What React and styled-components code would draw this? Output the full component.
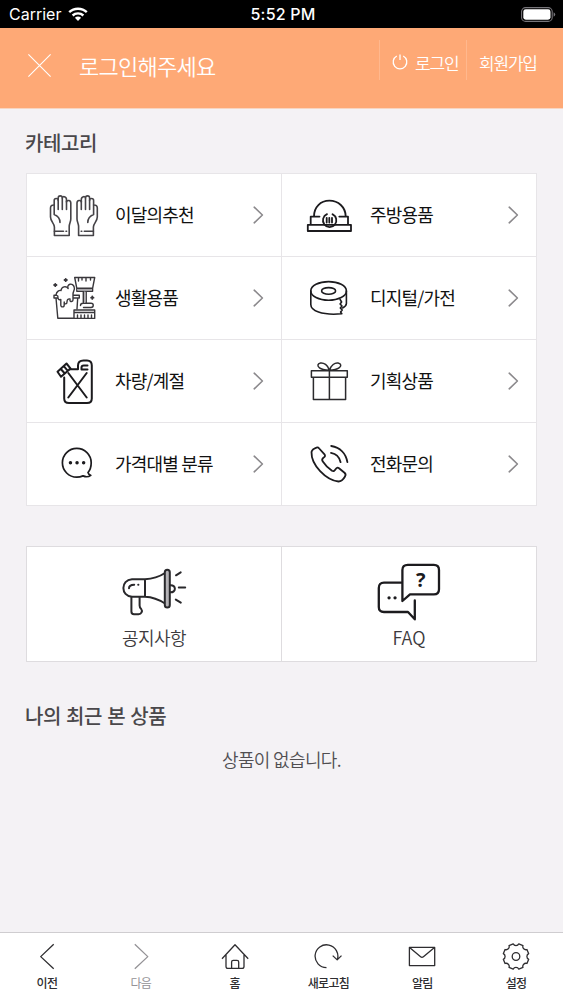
import React from "react";
import styled, { createGlobalStyle } from "styled-components";

const GlobalStyle = createGlobalStyle`
  * {
    box-sizing: border-box;
  }

  body {
    margin: 0;
    background-color: #f4f2f5;
    font-family: "Noto Sans CJK KR", sans-serif;
  }
`;

const Screen = styled.div`
  display: flex;
  flex-direction: column;
  height: 1000px;
  overflow: hidden;
`;

const StatusBar = styled.div`
  display: grid;
  grid-template-columns: 1fr auto 1fr;
  align-items: center;
  flex: none;
  height: 28px;
  padding: 0 7px 0 9px;
  background-color: #000;
  color: #fff;
  font-family: Inter, sans-serif;
  font-size: 16px;
  line-height: 28px;
`;

const Carrier = styled.div`
  display: flex;
  align-items: center;
  gap: 7px;
`;

const Clock = styled.div`
  margin-left: 1px;
  font-weight: 500;
  letter-spacing: 0.2px;
`;

const Battery = styled.svg`
  justify-self: end;
`;

const Header = styled.header`
  display: flex;
  flex: none;
  height: 81px;
  padding: 12px 13px 0 28px;
  background-color: #fea976;
  border-bottom: 1px solid #f8d5c1;
  color: #fff;
`;

const CloseIcon = styled.svg`
  margin-top: 14px;
`;

const HeaderTitle = styled.h1`
  flex-grow: 1;
  margin: 9px 0 0 28px;
  font-size: 22px;
  font-weight: 350;
  line-height: 32px;
  letter-spacing: -0.75px;
`;

const HeaderLink = styled.a`
  display: flex;
  align-items: center;
  gap: 7px;
  height: 40px;
  padding: 4px 0 0 12px;
  width: ${(props) => props.$width}px;
  border-left: 1px solid #ffb88e;
  font-size: 17px;
  font-weight: 350;
  letter-spacing: -1.2px;
  white-space: nowrap;
`;

const Content = styled.main`
  flex-grow: 1;
  padding: 0 26px;
`;

const SectionTitle = styled.h2`
  margin: ${(props) => props.$top}px 0 0 -1px;
  color: #4a484b;
  font-size: 20px;
  font-weight: 500;
  line-height: 30px;
  letter-spacing: -0.4px;
  word-spacing: 1px;
`;

const CategoryGrid = styled.div`
  display: grid;
  grid-template-columns: 254px 254px;
  grid-auto-rows: 82px;
  gap: 1px;
  width: 511px;
  margin-top: 15px;
  padding: 1px;
  background-color: #e7e5e8;
`;

const Category = styled.a`
  display: flex;
  align-items: center;
  padding: 0 17px 0 22px;
  background-color: #fff;
`;

const CategoryName = styled.span`
  flex-grow: 1;
  margin: -2px 0 0 14px;
  color: #111;
  font-size: 18px;
  line-height: 26px;
  letter-spacing: -0.8px;
`;

const SupportGrid = styled.div`
  display: grid;
  grid-template-columns: 254px 1fr;
  gap: 1px;
  width: 511px;
  height: 116px;
  margin-top: 40px;
  padding: 1px;
  background-color: #dedcdf;
`;

const Support = styled.a`
  display: flex;
  flex-direction: column;
  align-items: center;
  padding-top: 15px;
  background-color: #fff;
  color: #3c3a3d;
  font-size: 18px;
  font-weight: 350;
  line-height: 26px;
  letter-spacing: ${(props) => (props.$latin ? 0 : -0.6)}px;
`;

const Empty = styled.p`
  margin: 15px 0 0;
  color: #504e51;
  font-size: 18px;
  font-weight: 350;
  line-height: 26px;
  letter-spacing: -0.65px;
  text-align: center;
`;

const TabBar = styled.nav`
  display: grid;
  grid-template-columns: repeat(6, 1fr);
  flex: none;
  height: 68px;
  background-color: #fff;
  border-top: 1px solid #cfcdd0;
`;

const Tab = styled.a`
  display: flex;
  flex-direction: column;
  align-items: center;
  padding-top: 10px;
  color: ${(props) => (props.$disabled ? "#949296" : "#2e2d30")};
  font-size: 12px;
  font-weight: ${(props) => (props.$disabled ? 400 : 500)};
  line-height: 18px;
  letter-spacing: -0.7px;
`;

const TabIcon = styled.svg`
  flex: none;
  margin-bottom: 3px;
  fill: none;
  stroke: currentColor;
  stroke-width: 1.3;
  stroke-linejoin: round;
`;

const LineIcon = styled.svg`
  flex: none;
  fill: none;
  stroke: ${(props) => props.$color || "#1c1b1e"};
  stroke-width: ${(props) => props.$weight || 1.6};
  stroke-linecap: round;
  stroke-linejoin: round;
`;

const Glove = () => (
  <>
    <path d="M5.4 46.5V38C5.4 34.5 1.5 32.5 1.5 28V19C1.5 16.6 2.8 15.8 5.2 16V11.5C5.2 8.8 9.2 8.8 9.2 11.5V9C9.2 6.2 13.3 6.2 13.3 9C13.3 6.8 17.5 7.2 17.5 10.5V13C17.8 10.8 21.8 10.8 21.8 14V30C21.8 33 20.2 34.5 20.2 37.5V46.5Z" />
    <path d="M9.2 11.5V20.5M13.3 9V20.5M17.5 12V20.5M5.2 16V25.5C8.5 26.8 11 30 11 33.5M5.4 42.3H14.5M17 42.3H17.6" />
  </>
);

const icons = {
  gloves: (
    <LineIcon width="52" height="52" $color="#454347" $weight={1.6}>
      <Glove />
      <g transform="translate(49.8 0) scale(-1 1)">
        <Glove />
      </g>
    </LineIcon>
  ),
  cleaning: (
    <LineIcon width="52" height="52" $color="#39373b" $weight={1.4}>
      <path d="M5 23.3H30.3V26H5ZM7 26L8.8 46.3H24.5M28.7 26L28 37" />
      <path
        fill="#fff"
        d="M7 23C7.5 19 10.5 18 12 18.5C12.5 14.5 17 13.5 19.2 16.5C17 12.5 24 9.5 25.3 15.5C26.2 18 23.5 19.5 24 23V28C24 30 21 30 21 28.5V27C19 26.5 18 28 18 30C18 32.5 15.2 32.5 15.2 30V33C15.2 35.5 11.8 35.5 11.8 33V27.5C9.5 28.5 8.7 26.5 8.8 24Z"
      />
      <path d="M25.7 5.5H45.7L43.6 16.3H27.8ZM27.8 16.3V19.3H43.6V16.3M29.5 6V9M33 6V8M37 6V9M41.5 6V8M34.3 19.5V31M37.2 19.5V31M31.5 33.5C31.5 31.5 33 31.2 34 31.2H42C45 31.2 45 35.5 42 35.5H34.5M25 38H45.7V46.4H25ZM25 40.5H45.7" />
      <path d="M28.5 43V46M32 43V46M35.5 43V46M39 43V46M42.5 43V46" />
      <path strokeWidth="1.8" d="M6.3 11.8V14.2M5.1 13H7.5M16.7 6.8V9.2M15.5 8H17.9M43.3 24.5V26.9M42.1 25.7H44.5" />
      <path stroke="#aaa8ac" d="M29 17.8H42.4M35.8 20V30" />
    </LineIcon>
  ),
  can: (
    <LineIcon width="52" height="52" $weight={2}>
      <path d="M15.2 22.5V43.5C15.2 46.5 17 48 20 48H38C41 48 42.8 46.3 42.8 43.5V10.5C42.8 7.5 41 5.5 38 5.5H34.5C31 5.5 29 7 29 10.5V14.3H20.5" />
      <path d="M38.5 14.5H32.5V12.5C32.5 11 33.3 10.5 34.8 10.5H38.5M19.3 18L37.7 42.5M37.7 18L19.3 42.5" />
      <path d="M8.5 16.8L17.5 8.5L21.6 13.6L12 21.8ZM11.8 14L15.8 18.5M14.8 11.2L18.8 15.8" />
    </LineIcon>
  ),
  chat: (
    <LineIcon width="52" height="52" $weight={1.7}>
      <path d="M39 34.5C41.4 31.8 42.2 28.5 42.2 24.8A14.4 14.4 0 1 0 27.8 39.2C30.5 39.2 32.2 38.7 34 37.9C36 38.8 39.5 39 41.8 37.4C40.2 37 39.4 36 39 34.5Z" />
      <path strokeWidth="3.4" d="M21.4 24.8H21.5M28 24.8H28.1M34.6 24.8H34.7" />
    </LineIcon>
  ),
  helmet: (
    <LineIcon width="52" height="52" $weight={1.8}>
      <path d="M3.8 35.8H47V42H3.8ZM6.7 35.5V27.6H15.5M35.3 27.6H44V35.5M10 27.3C10 18 16.5 11.7 25.4 11.7S41.5 18 41.7 27.3" />
      <path d="M23 25.2A6.7 6.7 0 1 0 28.5 25.3L30.8 27M22.7 28.8V33.6M25.3 28.8V33.6M28 28.8V33.6" />
    </LineIcon>
  ),
  tape: (
    <LineIcon width="52" height="52" $weight={1.6}>
      <ellipse cx="24.6" cy="18.9" rx="17.8" ry="9.3" />
      <ellipse cx="24.6" cy="18.9" rx="7" ry="3.3" />
      <path d="M6.8 19V32.5C6.8 38.5 17 43.6 37.8 41.8L36.6 40L38.2 38L36.3 36L38 34L36.1 32L37.6 30L36.1 27.5M42.4 19V31.5C42.4 33.5 41 34.8 38.6 36" />
    </LineIcon>
  ),
  gift: (
    <LineIcon width="52" height="52" $color="#2b2a2d" $weight={1.5}>
      <path d="M7.4 15.7H43.3V22.2H7.4ZM9.4 22.2H41.6V44.6H9.4ZM25.4 15.7V44.6" />
      <path d="M25.4 15.3C24 10 19.5 7.5 16.5 8C13.5 8.8 13 11 15.5 12.8C18 14.6 22 15 25.4 15.3C27 10 31 7.5 34 8C37.5 8.8 37.5 11 35 12.8C32.5 14.6 29 15 25.4 15.3Z" />
    </LineIcon>
  ),
  phone: (
    <LineIcon width="52" height="52" $weight={1.8}>
      <path d="M7.5 14C8 12 10.5 10.3 12.5 9.6C13.7 9.2 14.4 9.5 15.2 10.5L20.5 16.3C21.5 17.5 21 18.6 20 19.3C18.2 20.5 17.5 21.5 18.6 23.2C21.2 27.2 24.3 30.2 28 32.7C29.6 33.6 30.8 32.8 31.6 31.2C32.4 29.8 33.6 29.2 35 30.2L40.5 34.8C42 36 41.8 37.2 41 38.5C39.5 41.2 37.5 43.5 34.5 43.5C22 42 7 27 7.5 14Z" />
      <path d="M27.2 8C36 9.4 42 15.5 43.4 24.2M27 14.8C31.8 15.6 35.5 19 36.6 24.2" />
    </LineIcon>
  ),
};

const categories = [
  { name: "이달의추천", icon: "gloves" },
  { name: "주방용품", icon: "helmet" },
  { name: "생활용품", icon: "cleaning" },
  { name: "디지털/가전", icon: "tape" },
  { name: "차량/계절", icon: "can" },
  { name: "기획상품", icon: "gift" },
  { name: "가격대별 분류", icon: "chat" },
  { name: "전화문의", icon: "phone" },
];

// eight teeth joined by concave arcs
const gearPath = () => {
  const point = (deg, r) => {
    const a = (deg * Math.PI) / 180;
    return `${(14 + r * Math.cos(a)).toFixed(2)} ${(13.5 + r * Math.sin(a)).toFixed(2)}`;
  };
  let d = `M${point(12.5, 13)}`;
  for (let i = 0; i < 8; i++) {
    const mid = 22.5 + i * 45;
    d += `L${point(mid + 10, 13)}A3.1 3.1 0 0 0 ${point(mid + 35, 13)}`;
  }
  return d + "Z";
};

const tabs = [
  { name: "이전", icon: <path d="M20.7 1.3L7.7 13.6L20.7 25.8" /> },
  { name: "다음", icon: <path d="M7.8 1.3L20.8 13.6L7.8 25.8" />, disabled: true },
  {
    name: "홈",
    icon: (
      <path d="M1 15.7L14 1.7L27.2 15.7M5 12V23.5Q5 25.4 7 25.4H21Q23 25.4 23 23.5V12M10.6 25V19Q10.6 17.3 12.3 17.3H16Q17.7 17.3 17.7 19V25" />
    ),
  },
  {
    name: "새로고침",
    icon: <path d="M12.5 24.6A11.4 11.4 0 1 1 23.3 16.8M18.7 12.6L23.2 16.9L27.5 12.6" />,
  },
  {
    name: "알림",
    icon: <path d="M1.4 4.4H26.7V22.6H1.4ZM1.6 4.6L12.6 13.8Q14 15 15.4 13.8L26.5 4.6" />,
  },
  {
    name: "설정",
    icon: (
      <>
        <path d={gearPath()} />
        <circle cx="14" cy="13.5" r="3.8" />
      </>
    ),
  },
];

const App = () => {
  return (
    <>
      <GlobalStyle />
      <Screen>
        <StatusBar>
          <Carrier>
            Carrier
            <svg width="20" height="15" viewBox="0 0 20 15" fill="none" stroke="#fff" strokeWidth="2.4">
              <path d="M1.2 5.2C6 0.6 14 0.6 18.8 5.2" />
              <path d="M4.6 8.5C7.6 5.7 12.4 5.7 15.4 8.5" />
              <path d="M6.9 10.8Q10 8.2 13.1 10.8L10 14Z" fill="#fff" stroke="none" />
            </svg>
          </Carrier>
          <Clock>5:52 PM</Clock>
          <Battery width="35" height="15" viewBox="0 0 35 15">
            <rect x="0.6" y="0.6" width="30.6" height="13.8" rx="4" fill="none" stroke="#77757a" strokeWidth="1.1" />
            <rect x="2.3" y="2.3" width="27.2" height="10.4" rx="2.4" fill="#fff" />
            <path d="M32.6 5.2Q34.2 6 34.2 7.5T32.6 9.8Z" fill="#77757a" />
          </Battery>
        </StatusBar>

        <Header>
          <CloseIcon width="23" height="23" stroke="#fff" strokeWidth="1.1">
            <path d="M0.4 0.4L22.6 22.6M22.6 0.4L0.4 22.6" />
          </CloseIcon>
          <HeaderTitle>로그인해주세요</HeaderTitle>
          <HeaderLink $width={87}>
            <svg width="16" height="16" fill="none" stroke="#fff" strokeWidth="1.3">
              <path d="M4.8 2A6.8 6.8 0 1 0 11.2 2M8 0.5V6" />
            </svg>
            로그인
          </HeaderLink>
          <HeaderLink $width={84}>회원가입</HeaderLink>
        </Header>

        <Content>
          <SectionTitle $top={19}>카테고리</SectionTitle>
          <CategoryGrid>
            {categories.map((category) => (
              <Category key={category.name}>
                {icons[category.icon]}
                <CategoryName>{category.name}</CategoryName>
                <LineIcon width="11" height="18" $color="#8b898c" $weight={1.6}>
                  <path d="M1.2 1.2L9.4 9L1.2 16.8" />
                </LineIcon>
              </Category>
            ))}
          </CategoryGrid>

          <SupportGrid>
            <Support>
              <LineIcon width="66" height="62" viewBox="0 -5 66 62" $color="#29282b" $weight={2}>
                <path d="M24 12.3H11C-0.5 12.8 -0.5 29.2 11 29.7H24ZM24 12.3C31 12 38 10 44 6M24 29.7C31 30 38 32.5 44 36.5" />
                <rect x="43.8" y="2.8" width="5" height="37.8" rx="2.5" fill="#b5b3b7" />
                <path d="M49 18.2C55.5 17.5 55.5 26 49 25.3M10.4 30V44.5C10.4 46.2 11.3 47.3 13 47.3H17.5C20.5 47.3 21.8 44 20.2 42C19 41 18.6 40 18.6 38.5V30" />
                <path d="M55 8.3L59.7 5.3M57.8 20.6H64.2M54.8 32.6L59.8 35.6M8 21.3C8 19 9.5 17.8 13.2 17.8M17.2 17.8H17.4" />
              </LineIcon>
              공지사항
            </Support>
            <Support $latin>
              <LineIcon width="66" height="62" $weight={2.3}>
                <path d="M25.5 20.7H8C4.5 20.7 2.8 22.5 2.8 26V45C2.8 48.3 4.5 50 8 50H32L38.8 57.3V38.5" />
                <path d="M26.4 39V8C26.4 4.5 28.2 2.8 31.8 2.8H57.8C61.2 2.8 63 4.5 63 8V27.2C63 30.7 61.2 32.4 57.8 32.4H34Z" />
                <path strokeWidth="3.2" d="M13 35.8H13.1M19 35.8H19.1" />
                <text
                  x="44.7"
                  y="25.2"
                  textAnchor="middle"
                  fontFamily="Open Sans, sans-serif"
                  fontSize="20"
                  fontWeight="700"
                  fill="#1c1b1e"
                  stroke="none"
                >
                  ?
                </text>
              </LineIcon>
              FAQ
            </Support>
          </SupportGrid>

          <SectionTitle $top={39}>나의 최근 본 상품</SectionTitle>
          <Empty>상품이 없습니다.</Empty>
        </Content>

        <TabBar>
          {tabs.map((tab) => (
            <Tab key={tab.name} $disabled={tab.disabled}>
              <TabIcon width="28" height="28">
                {tab.icon}
              </TabIcon>
              {tab.name}
            </Tab>
          ))}
        </TabBar>
      </Screen>
    </>
  );
};

export default App;
